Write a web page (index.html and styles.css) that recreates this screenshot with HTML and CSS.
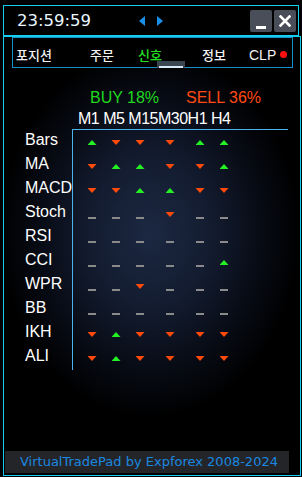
FILE: index.html
```html
<!DOCTYPE html>
<html lang="ko">
<head>
    <meta charset="UTF-8">
    <meta name="viewport" content="width=device-width, initial-scale=1.0">
    <title>VirtualTradePad</title>
    <link rel="stylesheet" href="styles.css">
</head>
<body>
    <div class="titlebar">
        <span class="clock">23:59:59</span>
        <div class="arrows">
            <svg width="6" height="10" viewBox="0 0 6 10"><polygon points="6,0 6,10 0,5" fill="#1a8fe8"/></svg>
            <svg width="6" height="10" viewBox="0 0 6 10"><polygon points="0,0 0,10 6,5" fill="#1a8fe8"/></svg>
        </div>
        <div class="buttons">
            <div class="btn btn-min"><span></span></div>
            <div class="btn btn-close">
                <svg width="12" height="12" viewBox="0 0 12 12"><path d="M1.5 1.5 L10.5 10.5 M10.5 1.5 L1.5 10.5" stroke="#fff" stroke-width="2.6" stroke-linecap="square"/></svg>
            </div>
        </div>
    </div>

    <div class="panel">
        <nav class="tabs">
            <span class="tab tab-pos">포지션</span>
            <span class="tab tab-order">주문</span>
            <span class="tab tab-signal active">신호</span>
            <span class="tab tab-info">정보</span>
            <span class="tab tab-clp">CLP<i class="dot"></i></span>
            <div class="indicator"></div>
        </nav>

        <div class="signals">
            <div class="summary">
                <span class="buy">BUY 18%</span>
                <span class="sell">SELL 36%</span>
            </div>
            <div class="timeframes">M1 M5 M15M30H1 H4</div>

            <div class="table">
                <div class="labels">
                    <div>Bars</div>
                    <div>MA</div>
                    <div>MACD</div>
                    <div>Stoch</div>
                    <div>RSI</div>
                    <div>CCI</div>
                    <div>WPR</div>
                    <div>BB</div>
                    <div>IKH</div>
                    <div>ALI</div>
                </div>
                <div class="cells">
                    <!-- Bars -->
                    <i class="u"></i><i class="d"></i><i class="d"></i><i class="d"></i><i class="u"></i><i class="u"></i>
                    <!-- MA -->
                    <i class="d"></i><i class="u"></i><i class="u"></i><i class="d"></i><i class="d"></i><i class="u"></i>
                    <!-- MACD -->
                    <i class="d"></i><i class="d"></i><i class="u"></i><i class="u"></i><i class="d"></i><i class="d"></i>
                    <!-- Stoch -->
                    <i class="n"></i><i class="n"></i><i class="n"></i><i class="d"></i><i class="n"></i><i class="n"></i>
                    <!-- RSI -->
                    <i class="n"></i><i class="n"></i><i class="n"></i><i class="n"></i><i class="n"></i><i class="n"></i>
                    <!-- CCI -->
                    <i class="n"></i><i class="n"></i><i class="n"></i><i class="n"></i><i class="n"></i><i class="u"></i>
                    <!-- WPR -->
                    <i class="n"></i><i class="n"></i><i class="d"></i><i class="n"></i><i class="n"></i><i class="n"></i>
                    <!-- BB -->
                    <i class="n"></i><i class="n"></i><i class="n"></i><i class="n"></i><i class="n"></i><i class="n"></i>
                    <!-- IKH -->
                    <i class="d"></i><i class="u"></i><i class="d"></i><i class="d"></i><i class="d"></i><i class="d"></i>
                    <!-- ALI -->
                    <i class="d"></i><i class="u"></i><i class="d"></i><i class="d"></i><i class="d"></i><i class="d"></i>
                </div>
            </div>
        </div>

        <div class="footer">VirtualTradePad by Expforex 2008-2024</div>
    </div>
</body>
</html>
```

FILE: styles.css
```css
:root {
    --frame: #16cdf0;
    --tab-border: #1890c8;
    --grid-line: #4ab4ee;
    --up: #24f024;
    --down: #ff4a0c;
    --flat: #8a8a8a;
}

body {
    margin: 0;
    width: 302px;
    height: 477px;
    overflow: hidden;
    background: #000;
    color: #fff;
    font-family: "Liberation Sans", Arial, sans-serif;
}

/* title bar */

.titlebar {
    margin: 5px 0 0 3px;
    width: 296px;
    height: 31px;
    box-sizing: border-box;
    border: 1px solid var(--frame);
    display: flex;
    align-items: center;
    padding-left: 13px;
}

.clock {
    width: 122px;
    font-family: "DejaVu Sans", sans-serif;
    font-size: 16.5px;
    color: #eaf6ff;
}

.arrows {
    display: flex;
    gap: 12px;
}

.arrows svg {
    display: block;
}

.buttons {
    margin-left: auto;
    margin-right: 2px;
    align-self: flex-start;
    margin-top: 4px;
    display: flex;
    gap: 2px;
}

.btn {
    width: 22px;
    height: 22px;
    background: #4a4e58;
    border-radius: 2px;
    display: flex;
    align-items: center;
    justify-content: center;
}

.btn-min span {
    width: 10px;
    height: 3px;
    background: #fff;
    margin-top: 12px;
}

.btn-close svg {
    display: block;
}

/* main panel */

.panel {
    margin-left: 3px;
    width: 298px;
    height: 440px;
    box-sizing: border-box;
    border: 1px solid var(--frame);
    display: flex;
    flex-direction: column;
}

.tabs {
    position: relative;
    margin-left: 8px;
    width: 281px;
    height: 31px;
    box-sizing: border-box;
    border: 1px solid var(--tab-border);
    display: flex;
    align-items: center;
    padding-top: 4px;
    font-family: "Noto Sans CJK KR", sans-serif;
    font-size: 13px;
    font-weight: 500;
    color: #f2f2f2;
}

.tab {
    line-height: 16px;
}

.tab-pos { width: 74px; padding-left: 3px; }
.tab-order { width: 48px; }
.tab-signal { width: 64px; }
.tab-info { width: 47px; }

.tab.active {
    color: #22e022;
}

.tab-clp {
    display: flex;
    align-items: center;
    font-family: "Liberation Sans", Arial, sans-serif;
    font-size: 14px;
    font-weight: normal;
}

.dot {
    width: 7px;
    height: 7px;
    border-radius: 50%;
    background: #ff1010;
    margin-left: 4px;
}

.indicator {
    position: absolute;
    left: 144px;
    top: 23px;
    width: 28px;
    height: 7px;
    background: #3a4552;
}

.indicator::after {
    content: "";
    position: absolute;
    left: 2px;
    right: 2px;
    bottom: 0;
    height: 2px;
    background: #d8eaf8;
}

/* signals */

.signals {
    flex: 1;
    padding-top: 21px;
    background: radial-gradient(ellipse 150px 185px at 146px 165px,
        #1c2842 0%, #131c30 40%, #080c16 72%, #000 100%);
}

.summary {
    display: flex;
    padding-left: 86px;
    font-size: 16px;
    line-height: 18px;
}

.buy {
    width: 96px;
    color: #1fd81f;
}

.sell {
    color: #ff4a14;
}

.timeframes {
    margin-top: 3px;
    padding-left: 74px;
    font-size: 16px;
    line-height: 18px;
    letter-spacing: -0.5px;
}

.table {
    display: flex;
}

.labels {
    width: 47px;
    padding-left: 21px;
    font-size: 16px;
    line-height: 24px;
}

.cells {
    margin-top: 1px;
    width: 216px;
    border-left: 1px solid var(--grid-line);
    border-top: 1px solid var(--grid-line);
    padding-left: 7px;
    box-sizing: border-box;
    display: grid;
    grid-template-columns: 24px 24px 24px 36px 24px 24px;
    grid-auto-rows: 24px;
    justify-items: center;
    align-items: start;
}

.cells i {
    display: block;
}

.u, .d {
    width: 9px;
    height: 5px;
    margin-top: 10px;
}

.u {
    background: var(--up);
    clip-path: polygon(50% 0, 100% 100%, 0 100%);
}

.d {
    background: var(--down);
    clip-path: polygon(0 0, 100% 0, 50% 100%);
}

.n {
    width: 8px;
    height: 2px;
    margin-top: 15px;
    background: var(--flat);
}

.footer {
    margin: 0 0 2px 1px;
    width: 284px;
    height: 22px;
    background: #242528;
    color: #1b88e0;
    font-family: "DejaVu Sans", sans-serif;
    font-size: 13px;
    line-height: 22px;
    padding-left: 15px;
    box-sizing: border-box;
}
```
